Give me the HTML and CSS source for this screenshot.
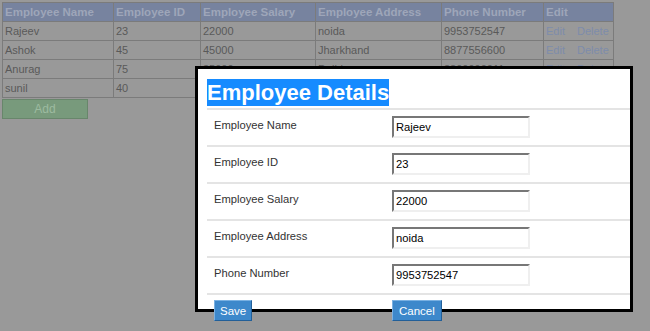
FILE: index.html
```html
<!DOCTYPE html>
<html lang="en">
<head>
    <meta charset="UTF-8">
    <meta name="viewport" content="width=device-width, initial-scale=1.0">
    <title>Employee List</title>
    <link rel="stylesheet" href="styles.css">
</head>
<body>

    <!-- Employee list (shown dimmed behind the dialog) -->
    <table class="emp-table">
        <colgroup>
            <col class="c-name"><col class="c-id"><col class="c-salary">
            <col class="c-address"><col class="c-phone"><col class="c-edit">
        </colgroup>
        <thead>
            <tr>
                <th>Employee Name</th>
                <th>Employee ID</th>
                <th>Employee Salary</th>
                <th>Employee Address</th>
                <th>Phone Number</th>
                <th>Edit</th>
            </tr>
        </thead>
        <tbody>
            <tr>
                <td>Rajeev</td><td>23</td><td>22000</td><td>noida</td><td>9953752547</td>
                <td><a href="#">Edit</a><a href="#" class="del">Delete</a></td>
            </tr>
            <tr>
                <td>Ashok</td><td>45</td><td>45000</td><td>Jharkhand</td><td>8877556600</td>
                <td><a href="#">Edit</a><a href="#" class="del">Delete</a></td>
            </tr>
            <tr>
                <td>Anurag</td><td>75</td><td>35000</td><td>Delhi</td><td>8800990011</td>
                <td><a href="#">Edit</a><a href="#" class="del">Delete</a></td>
            </tr>
            <tr>
                <td>sunil</td><td>40</td><td>30000</td><td>Patna</td><td>9876543210</td>
                <td><a href="#">Edit</a><a href="#" class="del">Delete</a></td>
            </tr>
        </tbody>
    </table>
    <button type="button" class="add-btn">Add</button>

    <!-- Edit dialog -->
    <div class="modal">
        <h2 class="modal-title"><span>Employee Details</span></h2>
        <table class="detail-table">
            <tr>
                <td class="lbl">Employee Name</td>
                <td class="fld"><input type="text" value="Rajeev"></td>
            </tr>
            <tr>
                <td class="lbl">Employee ID</td>
                <td class="fld"><input type="text" value="23"></td>
            </tr>
            <tr>
                <td class="lbl">Employee Salary</td>
                <td class="fld"><input type="text" value="22000"></td>
            </tr>
            <tr>
                <td class="lbl">Employee Address</td>
                <td class="fld"><input type="text" value="noida"></td>
            </tr>
            <tr>
                <td class="lbl">Phone Number</td>
                <td class="fld"><input type="text" value="9953752547"></td>
            </tr>
            <tr class="btn-row">
                <td class="lbl"><button type="button" class="btn">Save</button></td>
                <td class="fld"><button type="button" class="btn">Cancel</button></td>
            </tr>
        </table>
    </div>

</body>
</html>
```

FILE: styles.css
```css
* {
    margin: 0;
    padding: 0;
    box-sizing: border-box;
}

body {
    font-family: 'Liberation Sans', Arial, sans-serif;
    font-size: 11px;
    background-color: #999999;
    padding: 2px 0 0 2px;
}

/* background list */
.emp-table {
    border-collapse: collapse;
    table-layout: fixed;
    width: 611px;
}

.c-name { width: 111px; }
.c-id { width: 87px; }
.c-salary { width: 115px; }
.c-address { width: 126px; }
.c-phone { width: 102px; }
.c-edit { width: 70px; }

.emp-table th,
.emp-table td {
    border: 1px solid #7b7b7b;
    padding: 2px 2px;
    line-height: 14px;
    text-align: left;
    white-space: nowrap;
    overflow: hidden;
}

.emp-table th {
    background-color: #77839f;
    color: #9ea6b9;
    font-size: 11.5px;
    font-weight: bold;
}

.emp-table td {
    color: #595959;
}

.emp-table a {
    color: #7d8cab;
    text-decoration: none;
}

.emp-table a.del {
    margin-left: 12px;
}

.add-btn {
    display: block;
    width: 86px;
    height: 20px;
    margin-top: 1px;
    background-color: #789a7c;
    border: 1px solid #68866b;
    color: #9dbba0;
    font-family: inherit;
    font-size: 12px;
}

/* dialog */
.modal {
    position: absolute;
    left: 195px;
    top: 66px;
    width: 438px;
    height: 246px;
    background-color: #ffffff;
    border: 3px solid #000000;
    padding: 10px 0 0 9px;
}

.modal-title {
    font-size: 22px;
    line-height: 27px;
    height: 27px;
    margin-bottom: 2px;
}

.modal-title span {
    display: inline-block;
    vertical-align: top;
    height: 27px;
    background-color: #168bff;
    color: #ffffff;
}

.detail-table {
    width: 100%;
    border-collapse: collapse;
    border-top: 2px solid #e4e4e4;
}

.detail-table tr {
    border-bottom: 2px solid #e4e4e4;
}

.detail-table .btn-row {
    border-bottom: none;
}

.detail-table .lbl {
    width: 185px;
    padding: 9px 0 0 7px;
    vertical-align: top;
    color: #333333;
    font-size: 11.2px;
}

.detail-table .fld {
    padding: 6px 0 7px 0;
    vertical-align: top;
}

.detail-table input {
    width: 138px;
    height: 22px;
    padding: 0 2px;
    border: 2px solid;
    border-color: #777777 #efefef #efefef #777777;
    font-family: inherit;
    font-size: 11.2px;
    color: #000000;
}

.btn-row td.lbl,
.btn-row td.fld {
    padding-top: 5px;
}

.btn {
    height: 21px;
    padding: 0 5px;
    background-color: #3d88cb;
    border: 1px solid;
    border-color: #7ab1e2 #225f98 #225f98 #7ab1e2;
    color: #ffffff;
    font-family: inherit;
    font-size: 11.5px;
}

.btn-row .fld .btn {
    padding: 0 6px;
}
```
